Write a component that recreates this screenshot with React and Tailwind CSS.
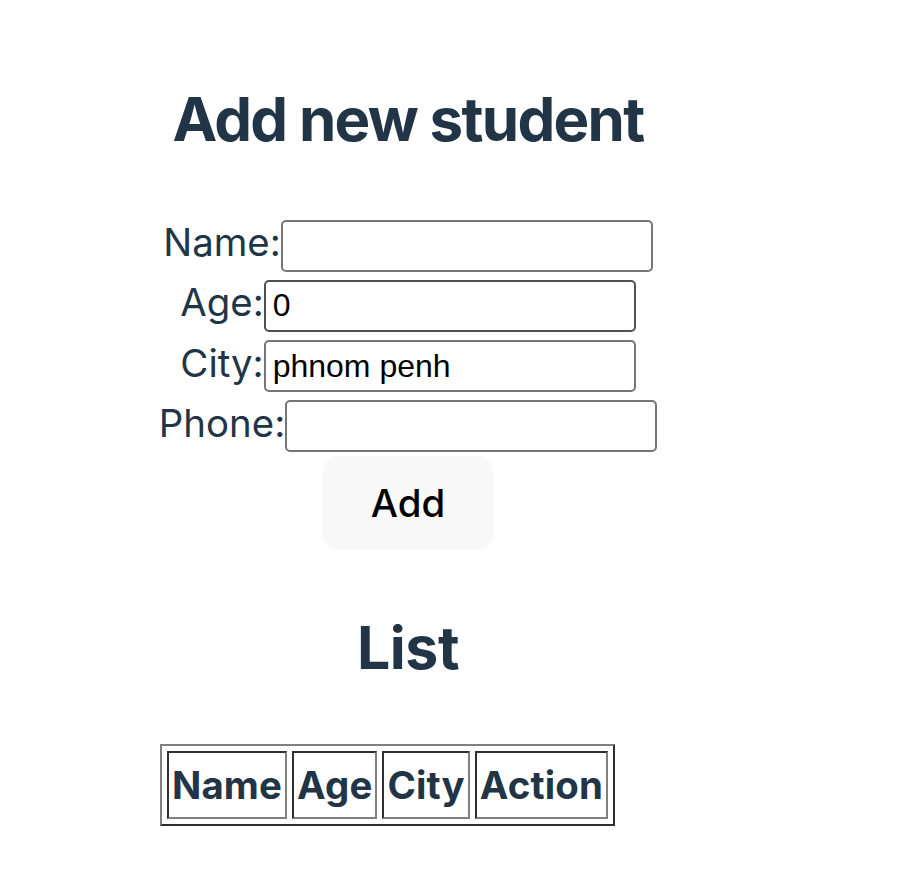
import { useState } from 'react';

const Field = ({ label, value, onChange, dark }) => (
  <div className="flex h-[60.33px] items-baseline justify-center">
    <label className="leading-[1.5]">{label}:</label>
    <input
      type="text"
      value={value}
      onChange={(e) => onChange(e.target.value)}
      className={`h-[52px] w-[372px] rounded-[5px] border-2 bg-white py-[5px] pl-[7px] pr-[4px] text-[32px] leading-[38px] text-black outline-none font-['Liberation_Sans',Arial,sans-serif] ${
        dark ? 'border-[#505050]' : 'border-[#767676]'
      }`}
    />
  </div>
);

const App = () => {
  const [name, setName] = useState('');
  const [age, setAge] = useState('0');
  const [city, setCity] = useState('phnom penh');
  const [phone, setPhone] = useState('');

  return (
    <div className="min-h-screen bg-white pl-[160px] pt-[84px] text-[38.4px] text-[#213547] font-['Inter','Noto_Sans',sans-serif]">
      <div className="flex w-[496px] flex-col">
        <h1 className="whitespace-nowrap text-center text-[60px] font-bold leading-[70px] tracking-[-1.7px]">
          Add new student
        </h1>

        <div className="mt-[60px] flex flex-col">
          <Field label="Name" value={name} onChange={setName} />
          <Field label="Age" value={age} onChange={setAge} dark />
          <Field label="City" value={city} onChange={setCity} />
          <Field label="Phone" value={phone} onChange={setPhone} />
        </div>

        <div className="mt-[1px] flex justify-center">
          <button className="h-[94px] w-[172px] rounded-[18px] bg-[#f9f9f9] font-medium text-black leading-none">
            Add
          </button>
        </div>

        <h2 className="mt-[65px] text-center text-[59px] font-bold leading-[65px] tracking-[-0.5px]">List</h2>

        <div className="mt-[64px]">
          <table className="border-separate border-spacing-[5px] border-2 border-t-[#808080] border-l-[#808080] border-r-[#2f2f2f] border-b-[#2f2f2f]">
            <thead>
              <tr>
                {['Name', 'Age', 'City', 'Action'].map((h) => (
                  <th
                    key={h}
                    className="border-2 border-t-[#2f2f2f] border-l-[#2f2f2f] border-r-[#808080] border-b-[#808080] p-[3px] font-bold leading-[58px] tracking-[0.15px]"
                  >
                    {h}
                  </th>
                ))}
              </tr>
            </thead>
            <tbody></tbody>
          </table>
        </div>
      </div>
    </div>
  );
};

export default App;
